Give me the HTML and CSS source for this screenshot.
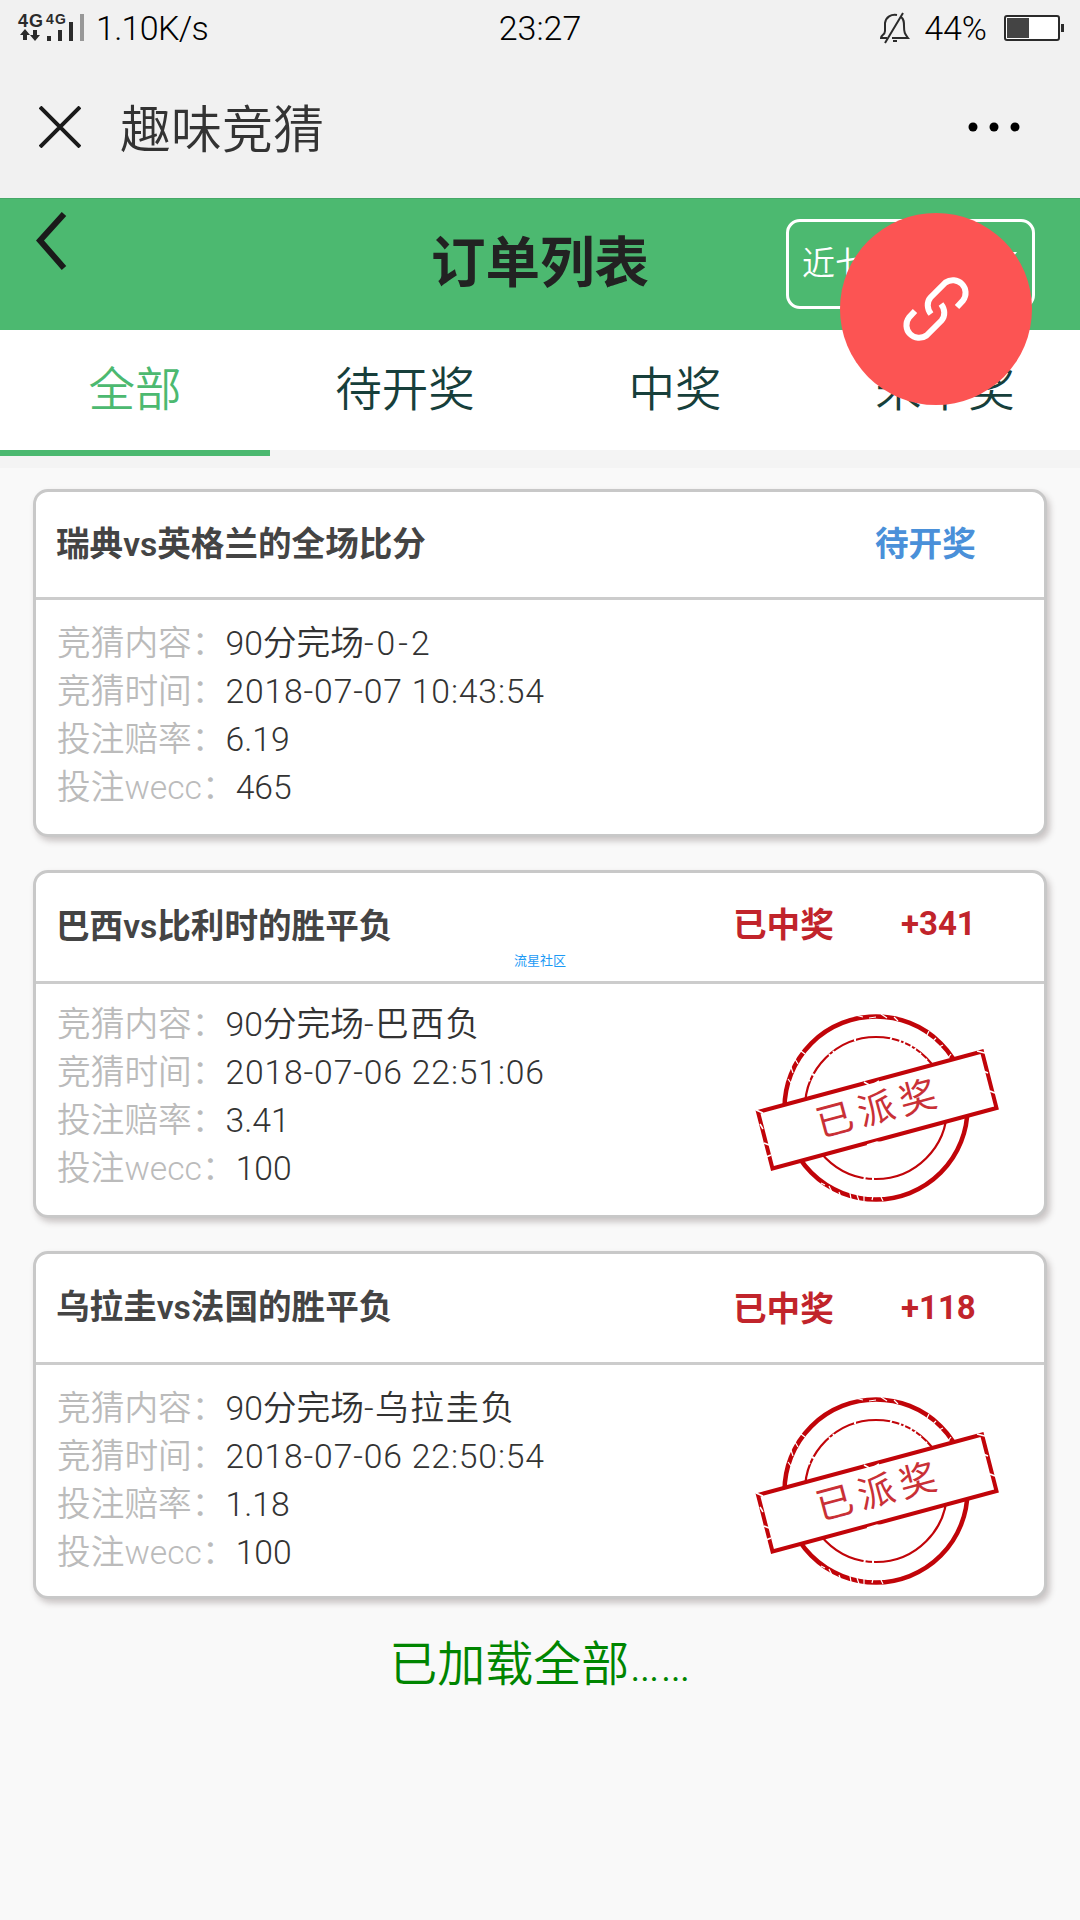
FILE: index.html
```html
<!DOCTYPE html>
<html lang="zh-CN">
<head>
	<meta charset="utf-8">
	<meta content="width=device-width, initial-scale=1.0" name="viewport">
	<title>趣味竞猜</title>
	<link rel="stylesheet" href="styles.css">
</head>
<body>
	<svg width="0" height="0" class="defs">
		<defs>
			<symbol id="stamp" viewBox="0 0 244 192">
				<g fill="none" stroke="#c10409">
					<circle cx="121" cy="97" r="91.500" stroke-width="4.500"/>
					<circle cx="121" cy="97" r="71" stroke-width="2.200"/>
				</g>
				<!-- worn edges -->
				<g fill="none" stroke="#fff">
					<path d="M36 56l2 6M40 48l3 5M33 68l3 4M46 40l4 3M74 175l3 6M84 181l2 6M95 182l1 6M102 184l2 6M109 184v6M118 185l-1 4M126 186l2 4M66 172l4 2M100 4l8 2M114 7l7-1M126 3l6 4M139 6l4 4M174 20l-3 6M181 27l-4 4M188 34l-4 2M196 43l-3 4" stroke-width="1.200"/>
					<path d="M55 70l-4-3M57 63l4 2M74 43l3 4M78 40l3 4M100 26v4M137 25l-2 5M146 28l-2 5M150 30l-2 5M157 34l-3 5M161 37l-3 4M166 42l-4 3M172 48l-4 3M176 137l-5-4M118 166v5M110 165l-1 5" stroke-width="2"/>
				</g>
				<path d="M3 101L227 40.500L241.500 97L17.500 157.500Z" fill="#fff" stroke="#c10409" stroke-width="4"/>
				<path d="M1 99l7 3M5 113l3 5M9 132l5 2M11 146l5-2M109 71l7 4 8-5M112 134l10-3 6 1M222 40l8 2M228 60l5 2M235 80l5 2" fill="none" stroke="#fff" stroke-width="1.500"/>
			</symbol>
		</defs>
	</svg>

	<div class="status">
		<div class="status-l">
			<svg class="signal" width="70" height="40" viewBox="-2 -5 70 40">
				<text x="0" y="14" font-size="18" textLength="25">4G</text>
				<text x="28" y="11" font-size="14" textLength="20">4G</text>
				<path d="M7 16l5 6H9v5H5v-5H2zM17 28l5-6h-3v-5h-4v5h-3z"/>
				<path d="M29 23h4v5h-4zM40 17h4v11h-4zM51 9h4v19h-4z"/>
				<path d="M62 1h4v27h-4z" fill="#989898"/>
			</svg>
			<span class="speed">1.10K/s</span>
		</div>
		<span class="time">23:27</span>
		<div class="status-r">
			<svg width="30" height="32" viewBox="0 0 30 32" fill="none" stroke="#2b2b2b" stroke-width="2">
				<path d="M17 3c-6-1-11 2-12 8v8c0 4-4 4-4 7h6M21 5c3 2 3 5 3 9 0 7 1 8 4 12H12M13 29h4M23 1L5 31"/>
			</svg>
			<span class="pct">44%</span>
			<svg width="60" height="26" viewBox="0 0 60 26">
				<rect x="1" y="1" width="54" height="24" rx="2" fill="#fff" stroke="#2b2b2b" stroke-width="2"/>
				<path d="M3 3h22v20H3z" fill="#444"/>
				<path d="M57 9h3v8h-3z" fill="#2b2b2b"/>
			</svg>
		</div>
	</div>
	<div class="nav">
		<svg width="42" height="42" viewBox="0 0 42 42" stroke="#1a1a1a" stroke-width="4"><path d="M1 1l40 40M41 1L1 41"/></svg>
		<span class="nav-title">趣味竞猜</span>
		<svg class="more" width="52" height="10" viewBox="0 0 52 10"><circle cx="5" cy="5" r="4.500"/><circle cx="26" cy="5" r="4.500"/><circle cx="47" cy="5" r="4.500"/></svg>
	</div>

	<div class="header">
		<svg class="back" width="32" height="58" viewBox="0 0 32 58" fill="none" stroke="#1a1a1a" stroke-width="6"><path d="M28 2L4 28.500L28 56"/></svg>
		<h1>订单列表</h1>
		<div class="range">近七天<i></i></div>
	</div>
	<div class="tabs">
		<div class="tab on">全部</div>
		<div class="tab">待开奖</div>
		<div class="tab">中奖</div>
		<div class="tab">未中奖</div>
	</div>

	<div class="list">
		<div class="card first">
			<div class="hd"><b>瑞典vs英格兰的全场比分</b><span class="wait">待开奖</span></div>
			<div class="bd">
				<p><label>竞猜内容：</label>90分完场<span class="score">-0-2</span></p>
				<p><label>竞猜时间：</label><span class="date">2018-07-07 10:43:54</span></p>
				<p><label>投注赔率：</label>6.19</p>
				<p><label>投注wecc：</label>465</p>
			</div>
		</div>
		<div class="card">
			<div class="hd"><b>巴西vs比利时的胜平负</b><span class="win">已中奖</span><span class="num">+341</span></div>
			<div class="bd">
				<p><label>竞猜内容：</label>90分完场<span class="pick">-巴西负</span></p>
				<p><label>竞猜时间：</label><span class="date">2018-07-06 22:51:06</span></p>
				<p><label>投注赔率：</label>3.41</p>
				<p><label>投注wecc：</label>100</p>
				<div class="stamp"><svg width="244" height="192"><use href="#stamp"/></svg><span>已派奖</span></div>
			</div>
			<span class="mark">流星社区</span>
		</div>
		<div class="card last">
			<div class="hd"><b>乌拉圭vs法国的胜平负</b><span class="win">已中奖</span><span class="num">+118</span></div>
			<div class="bd">
				<p><label>竞猜内容：</label>90分完场<span class="pick">-乌拉圭负</span></p>
				<p><label>竞猜时间：</label><span class="date">2018-07-06 22:50:54</span></p>
				<p><label>投注赔率：</label>1.18</p>
				<p><label>投注wecc：</label>100</p>
				<div class="stamp"><svg width="244" height="192"><use href="#stamp"/></svg><span>已派奖</span></div>
			</div>
		</div>
	</div>
	<div class="end">已加载全部……</div>

	<div class="fab">
		<svg width="66" height="66" viewBox="0 0 66 66" fill="none" stroke="#fff" stroke-width="6">
			<path d="M54 31L60 24.500A12.700 12.700 0 0 0 42.500 6.500L27.500 21.500C23.500 26 24 33 28 38"/>
			<path d="M12 35L6 41.500A12.700 12.700 0 0 0 23.500 59.500L38.500 44.500C42.500 40 42 33 38 28"/>
		</svg>
	</div>
</body>
</html>
```

FILE: styles.css
```css
* {
	box-sizing: border-box;
}
body {
	margin: 0;
	width: 1080px;
	height: 1920px;
	overflow: hidden;
	position: relative;
	background-color: #f9f9f9;
	font-family: Roboto, "Noto Sans CJK SC", sans-serif;
	font-weight: 350;
	color: #333;
}
p, h1 {
	margin: 0;
}
svg {
	display: block;
	flex: none;
}
.defs {
	position: absolute;
}

/* phone bars */
.status {
	height: 56px;
	padding: 0 16px;
	display: grid;
	grid-template-columns: 1fr auto 1fr;
	align-items: center;
	background-color: #f1f1f1;
	color: #000;
	font-size: 34px;
	line-height: 56px;
}
.status-l {
	display: flex;
	align-items: center;
}
.speed {
	margin-left: 10px;
	letter-spacing: -.7px;
}
.signal {
	fill: #2b2b2b;
}
.signal text {
	font-family: "Liberation Sans", sans-serif;
	font-weight: bold;
}
.status-r {
	display: flex;
	justify-content: flex-end;
	align-items: center;
}
.pct {
	margin: 0 17px 0 14px;
}
.nav {
	height: 142px;
	padding: 0 60px 0 39px;
	display: flex;
	align-items: center;
	background-color: #f1f1f1;
}
.nav-title {
	margin-left: 39px;
	padding-bottom: 2px;
	font-size: 51px;
}
.more {
	margin-left: auto;
}

.header {
	height: 132px;
	padding: 0 45px 2px 36px;
	display: grid;
	grid-template-columns: 1fr auto 1fr;
	align-items: center;
	background-color: #4cb970;
	border-top: 1px solid #46a868;
}
.back {
	align-self: start;
	margin-top: 13px;
}
h1 {
	padding: 0 0 9px 9px;
	font-family: "Noto Sans CJK SC", sans-serif;
	font-size: 54.5px;
	line-height: 80px;
	font-weight: 600;
	color: #222;
}
.range {
	justify-self: end;
	width: 249px;
	height: 90px;
	padding: 0 15px 6px 13px;
	display: flex;
	align-items: center;
	justify-content: space-between;
	border: 3px solid #fff;
	border-radius: 14px;
	color: #fff;
	font-size: 33px;
}
.range i {
	margin-bottom: 6px;
	border: 9px solid transparent;
	border-top: 12px solid #fff;
	border-bottom: 0;
}
.tabs {
	height: 138px;
	display: flex;
	background: linear-gradient(#fff 120px, #f4f4f4 120px);
}
.tab {
	width: 270px;
	height: 126px;
	line-height: 120px;
	text-align: center;
	font-size: 46.5px;
	color: #173f3b;
}
.tab.on {
	color: #4cb970;
	border-bottom: 6px solid #4cb970;
}

.list {
	padding: 21px 33px 0;
	display: flex;
	flex-direction: column;
	gap: 33px;
}
.card {
	position: relative;
	height: 348px;
	background-color: #fff;
	border: 3px solid #c8c8c8;
	border-radius: 15px;
	box-shadow: 3px 4px 6px rgba(60, 40, 40, .25);
}
.hd {
	height: 111px;
	padding: 0 0 8px 20px;
	display: grid;
	grid-template-columns: 1fr 167px 142px;
	align-items: center;
	border-bottom: 3px solid #ccc;
	font-size: 33.6px;
	font-weight: 500;
}
.first .hd {
	height: 108px;
	padding-bottom: 6px;
	grid-template-columns: 1fr 169px;
}
.hd b {
	font-weight: 600;
	color: #444;
}
.wait, .win {
	font-family: "Noto Sans CJK SC", sans-serif;
	font-weight: 600;
}
.wait {
	color: #4a90d9;
}
.win, .num {
	color: #c1242b;
}
.win {
	margin-left: -2px;
	padding-bottom: 2px;
}
.num {
	margin-left: -1px;
	font-size: 33px;
	font-weight: 700;
}
.last .win,
.last .num {
	padding-top: 6px;
}
.bd {
	position: relative;
	padding: 17px 0 0 21px;
}
.first .bd,
.last .bd {
	padding-top: 20px;
}
.bd p {
	height: 48px;
	line-height: 48px;
	font-size: 33.7px;
}
.bd label {
	color: #bbb;
}
.date {
	letter-spacing: .85px;
}
.score {
	letter-spacing: 3px;
}
.pick {
	letter-spacing: 1.5px;
}
.stamp {
	position: absolute;
	left: 719px;
	top: 27px;
}
.last .stamp {
	top: 29px;
}
.stamp span {
	position: absolute;
	left: 60px;
	top: 74px;
	font-size: 37px;
	line-height: 48px;
	letter-spacing: 6px;
	white-space: nowrap;
	font-weight: 400;
	color: #c93036;
	transform: rotate(-15deg);
}
.mark {
	position: absolute;
	left: 478px;
	top: 78px;
	font-size: 13px;
	line-height: 20px;
	font-weight: 400;
	color: #1c9af5;
}
.end {
	margin-top: 31px;
	text-align: center;
	font-size: 48px;
	line-height: 70px;
	color: #008500;
}

.fab {
	position: absolute;
	left: 840px;
	top: 213px;
	width: 192px;
	height: 192px;
	border-radius: 50%;
	display: flex;
	align-items: center;
	justify-content: center;
	background-color: #fc5453;
}
```
